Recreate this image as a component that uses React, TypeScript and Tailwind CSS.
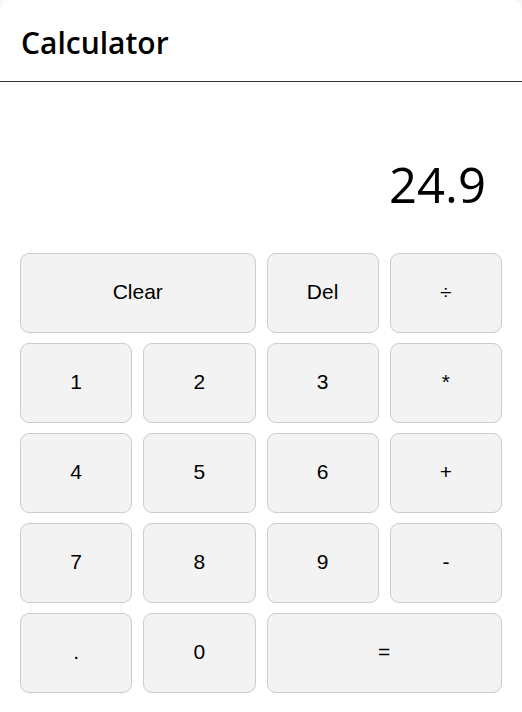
const keys: { label: string; span?: boolean }[] = [
  { label: 'Clear', span: true },
  { label: 'Del' },
  { label: '÷' },
  { label: '1' },
  { label: '2' },
  { label: '3' },
  { label: '*' },
  { label: '4' },
  { label: '5' },
  { label: '6' },
  { label: '+' },
  { label: '7' },
  { label: '8' },
  { label: '9' },
  { label: '-' },
  { label: '.' },
  { label: '0' },
  { label: '=', span: true },
];

export default function App() {
  return (
    <div className="min-h-screen bg-[#f7f7f7]">
      <div className="bg-white rounded-t-[10px] min-h-[712px]">
        {/* Header */}
        <div className="h-[82px] border-b border-[#333] flex items-center px-[21px] pt-[3px]">
          <h1 className="text-[30px] font-semibold text-black font-['Open_Sans',sans-serif]">Calculator</h1>
        </div>

        {/* Display */}
        <div className="h-[171px] flex items-center justify-end pr-[36px] pt-[34px]">
          <span className="text-[49px] text-black font-['Open_Sans',sans-serif]">24.9</span>
        </div>

        {/* Keypad */}
        <div className="grid grid-cols-4 gap-x-[11px] gap-y-[10px] px-[20px]">
          {keys.map((k) => (
            <button
              key={k.label}
              className={`${k.span ? 'col-span-2' : ''} h-[80px] rounded-[9px] border border-[#cccccc] bg-[#f3f3f3] pb-[2px] text-[21px] text-black font-['Liberation_Sans',Arial,sans-serif]`}
            >
              {k.label}
            </button>
          ))}
        </div>
      </div>
    </div>
  );
}
